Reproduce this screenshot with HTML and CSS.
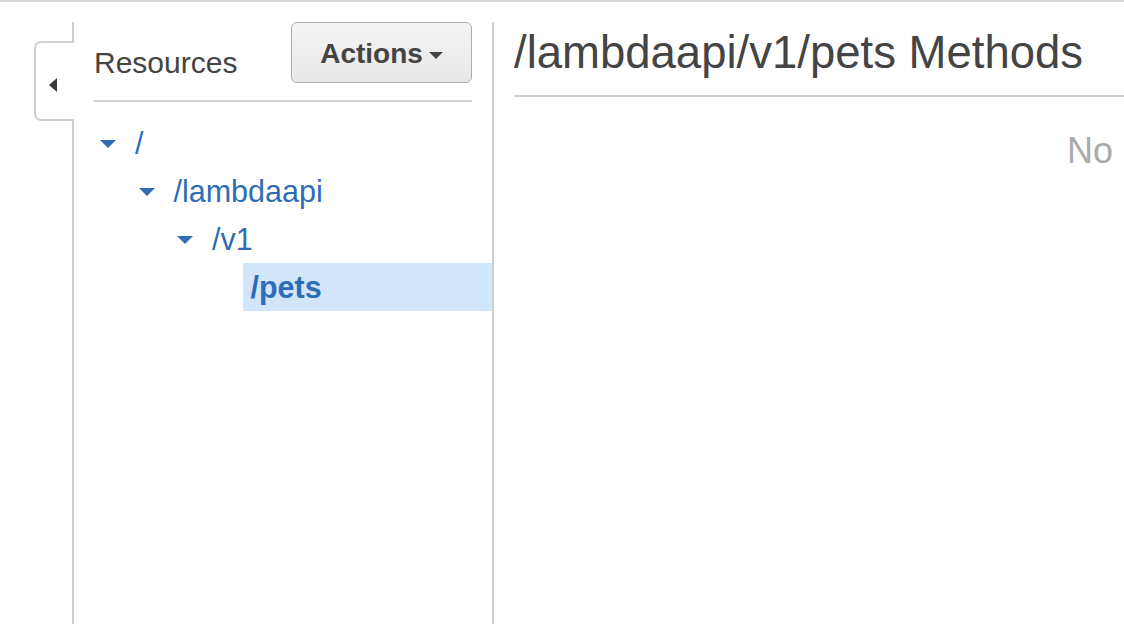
FILE: index.html
```html
<!DOCTYPE html>
<html lang="en">
<head>
<meta charset="utf-8">
<title>Resources</title>
<link rel="stylesheet" href="styles.css">
</head>
<body>
<div class="page">
  <aside class="sidebar">
    <div class="collapse-tab"><span class="tab-arrow"></span></div>
    <div class="sidebar-header">
      <span class="sidebar-title">Resources</span>
      <button class="actions-btn" type="button">Actions<span class="caret"></span></button>
    </div>
    <ul class="tree">
      <li class="node level-0"><span class="toggle"><span class="tri"></span></span><span class="label">/</span></li>
      <li class="node level-1"><span class="toggle"><span class="tri"></span></span><span class="label">/lambdaapi</span></li>
      <li class="node level-2"><span class="toggle"><span class="tri"></span></span><span class="label">/v1</span></li>
      <li class="node level-3"><span class="toggle"></span><span class="label selected">/pets</span></li>
    </ul>
  </aside>
  <main class="main">
    <h1 class="main-title">/lambdaapi/v1/pets Methods</h1>
    <div class="empty-wrap"><p class="empty">No methods defined for the resource.</p></div>
  </main>
</div>
</body>
</html>
```

FILE: styles.css
```css
html, body {
  margin: 0;
  padding: 0;
  height: 100%;
  overflow: hidden;
  background: #fff;
  font-family: "Liberation Sans", Arial, Helvetica, sans-serif;
}

.page {
  display: flex;
  height: 100vh;
  box-sizing: border-box;
  border-top: 2px solid #d8d8d8;
}

.sidebar {
  position: relative;
  flex: 0 0 auto;
  width: 418px;
  margin-left: 72px;
  margin-top: 20px;
  border-left: 2px solid #cfcfcf;
  border-right: 2px solid #cfcfcf;
}

.collapse-tab {
  position: absolute;
  left: -40px;
  top: 19px;
  width: 34px;
  height: 68px;
  padding: 8px 4px 0 0;
  border: 2px solid #d0d0d0;
  border-right: none;
  border-radius: 7px 0 0 7px;
  background: #fff;
  display: flex;
  align-items: center;
  justify-content: center;
}

.tab-arrow {
  width: 0;
  height: 0;
  border-top: 7px solid transparent;
  border-bottom: 7px solid transparent;
  border-right: 8px solid #3a3a3a;
}

.sidebar-header {
  display: flex;
  justify-content: space-between;
  align-items: flex-start;
  height: 78px;
  margin: 0 20px;
  border-bottom: 2px solid #d2d2d2;
}

.sidebar-title {
  margin-top: 24px;
  font-size: 30px;
  line-height: 34px;
  color: #444;
}

.actions-btn {
  width: 181px;
  height: 61px;
  box-sizing: border-box;
  display: flex;
  align-items: center;
  justify-content: center;
  gap: 6px;
  padding: 2px 0 0;
  border: 1px solid #a9adb3;
  border-radius: 6px;
  background: linear-gradient(#f4f4f4, #e8e8e8);
  font-family: "Liberation Sans", Arial, Helvetica, sans-serif;
  font-weight: bold;
  font-size: 28px;
  color: #444;
  cursor: pointer;
}

.caret {
  width: 0;
  height: 0;
  margin-top: 4px;
  border-left: 7px solid transparent;
  border-right: 7px solid transparent;
  border-top: 7px solid #444;
}

.tree {
  list-style: none;
  margin: 0;
  padding: 17px 0 0 26px;
}

.node {
  display: flex;
  align-items: center;
  height: 48px;
}

.level-1 { margin-left: 38.5px; }
.level-2 { margin-left: 77px; }
.level-3 { margin-left: 115.5px; }

.toggle {
  flex: 0 0 27px;
  display: flex;
  align-items: center;
  height: 48px;
  padding-top: 2px;
  box-sizing: border-box;
}

.tri {
  width: 0;
  height: 0;
  border-left: 8px solid transparent;
  border-right: 8px solid transparent;
  border-top: 8px solid #2e6db5;
}

.label {
  flex: 1 1 auto;
  padding-left: 8px;
  font-size: 30.5px;
  line-height: 48px;
  color: #2e6db5;
  white-space: nowrap;
}

.label.selected {
  background: #d1e6fb;
  font-weight: bold;
}

.main {
  flex: 1 1 auto;
  min-width: 0;
  margin-top: 20px;
  padding: 5px 0 0 20px;
}

.main-title {
  margin: 0;
  padding-bottom: 16px;
  border-bottom: 2px solid #d2d2d2;
  font-size: 45.5px;
  line-height: 52px;
  font-weight: normal;
  color: #444;
  white-space: nowrap;
}

.empty-wrap {
  overflow: hidden;
}

.empty {
  margin: 33px 0 0 553px;
  font-size: 36px;
  line-height: 42px;
  color: #aaa;
  white-space: nowrap;
}
```
